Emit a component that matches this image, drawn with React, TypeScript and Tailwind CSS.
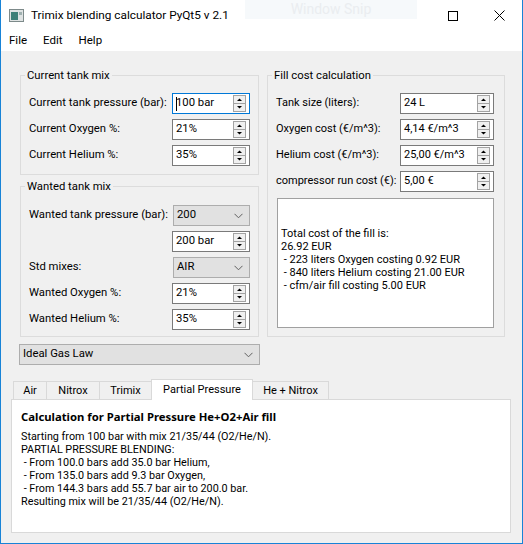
import type { ReactNode } from "react";

function SpinArrows() {
  return (
    <svg width="13" height="17" viewBox="0 0 13 17" className="shrink-0">
      <rect x="0.5" y="0.5" width="12" height="16" fill="#f0f0f0" stroke="#a3a3a3" />
      <line x1="1" y1="8.5" x2="12" y2="8.5" stroke="#a3a3a3" />
      <path d="M4 6 L6.5 3.5 L9 6 Z" fill="#000" />
      <path d="M4 11 L6.5 13.5 L9 11 Z" fill="#000" />
    </svg>
  );
}

function SpinBox({ value, focused = false, className = "" }: { value: string; focused?: boolean; className?: string }) {
  return (
    <div
      className={`h-[21px] shrink-0 bg-white border flex items-center justify-between pl-[3px] pr-[3px] ${
        focused ? "border-[#0078d7]" : "border-[#7a7a7a]"
      } ${className}`}
    >
      <span className="flex items-center whitespace-nowrap">
        {focused && <span className="w-px h-[14px] bg-black mr-[-1px]" />}
        {value}
      </span>
      <SpinArrows />
    </div>
  );
}

function Chevron() {
  return (
    <svg width="9" height="6" viewBox="0 0 9 6" className="shrink-0">
      <path d="M0.5 0.8 L4.5 4.8 L8.5 0.8" fill="none" stroke="#606060" strokeWidth="1" />
    </svg>
  );
}

function ComboBox({ value, className = "" }: { value: string; className?: string }) {
  return (
    <div
      className={`h-[21px] shrink-0 bg-[#e1e1e1] border border-[#adadad] flex items-center justify-between pl-[3px] pr-[6px] ${className}`}
    >
      <span>{value}</span>
      <Chevron />
    </div>
  );
}

function GroupBox({ title, className = "", children }: { title: string; className?: string; children: ReactNode }) {
  return (
    <fieldset className={`border border-[#dcdcdc] ${className}`}>
      <legend className="ml-[4px] px-[2px] leading-[15px]">{title}</legend>
      {children}
    </fieldset>
  );
}

function Row({ label, children }: { label: string; children: ReactNode }) {
  return (
    <div className="flex items-center justify-between h-[21px]">
      <span className="whitespace-nowrap">{label}</span>
      {children}
    </div>
  );
}

const tabs = [
  { label: "Air", w: "w-[34px]" },
  { label: "Nitrox", w: "w-[54px]" },
  { label: "Trimix", w: "w-[53px]" },
  { label: "Partial Pressure", w: "w-[102px]", active: true },
  { label: "He + Nitrox", w: "w-[77px]" },
];

const costLines = [
  "Total cost of the fill is:",
  "26.92 EUR",
  " - 223 liters Oxygen costing 0.92 EUR",
  " - 840 liters Helium costing 21.00 EUR",
  " - cfm/air fill costing 5.00 EUR",
];

const resultLines = [
  "Starting from 100 bar with mix 21/35/44 (O2/He/N).",
  "PARTIAL PRESSURE BLENDING:",
  " - From 100.0 bars add 35.0 bar Helium,",
  " - From 135.0 bars add 9.3 bar Oxygen,",
  " - From 144.3 bars add 55.7 bar air to 200.0 bar.",
  "Resulting mix will be 21/35/44 (O2/He/N).",
];

export default function App() {
  return (
    <div className="w-[523px] h-[544px] flex flex-col border-x border-b border-[#1883d7] bg-[#f0f0f0] text-black text-[11.3px] font-['Roboto',sans-serif] overflow-hidden">
      {/* Title bar */}
      <div className="relative h-[31px] shrink-0 bg-white flex items-center">
        <svg width="15" height="13" viewBox="0 0 15 13" className="ml-[8px] shrink-0">
          <rect x="0.5" y="0.5" width="14" height="12" fill="#dfe3e3" stroke="#7d8a8a" />
          <rect x="2" y="3" width="7" height="8" fill="#3e8078" />
          <rect x="10" y="3" width="3" height="3" fill="#9fb0b0" />
        </svg>
        <span className="ml-[7px] text-[11.8px]">Trimix blending calculator PyQt5 v 2.1</span>
        <div className="absolute left-[244px] top-0 w-[172px] h-[19px] bg-[#f6f9fb] flex items-center justify-center text-[14px] text-[#eaedf0]">
          Window Snip
        </div>
        <div className="ml-auto flex h-full">
          <div className="w-[46px] h-full flex items-center justify-center">
            <svg width="10" height="10" viewBox="0 0 10 10">
              <line x1="0" y1="5.5" x2="10" y2="5.5" stroke="#000" />
            </svg>
          </div>
          <div className="w-[46px] h-full flex items-center justify-center">
            <svg width="10" height="10" viewBox="0 0 10 10">
              <rect x="0.5" y="0.5" width="9" height="9" fill="none" stroke="#000" />
            </svg>
          </div>
          <div className="w-[46px] h-full flex items-center justify-center">
            <svg width="11" height="11" viewBox="0 0 11 11">
              <path d="M0.5 0.5 L10.5 10.5 M10.5 0.5 L0.5 10.5" stroke="#000" strokeWidth="1" />
            </svg>
          </div>
        </div>
      </div>

      {/* Menu bar */}
      <div className="h-[20px] shrink-0 bg-white flex items-center pl-[8px] gap-[16px] text-[11.5px]">
        <span>File</span>
        <span>Edit</span>
        <span>Help</span>
      </div>

      <div className="flex-1 flex flex-col px-[10px]">
        <div className="flex gap-[7px] pl-[8px] pt-[17px]">
          {/* Left column */}
          <div className="w-[241px] flex flex-col">
            <GroupBox title="Current tank mix" className="mx-[1px]">
              <div className="flex flex-col gap-[5px] pt-[10px] pb-[8px] pl-[8px] pr-[8px]">
                <Row label="Current tank pressure (bar):">
                  <SpinBox value="100 bar" focused className="w-[78px]" />
                </Row>
                <Row label="Current Oxygen %:">
                  <SpinBox value="21%" className="w-[78px]" />
                </Row>
                <Row label="Current Helium %:">
                  <SpinBox value="35%" className="w-[78px]" />
                </Row>
              </div>
            </GroupBox>

            <GroupBox title="Wanted tank mix" className="mx-[1px] mt-[4px]">
              <div className="flex flex-col gap-[5px] pt-[11px] pb-[6px] pl-[8px] pr-[8px]">
                <Row label="Wanted tank pressure (bar):">
                  <ComboBox value="200" className="w-[77px]" />
                </Row>
                <div className="flex justify-end">
                  <SpinBox value="200 bar" className="w-[78px]" />
                </div>
                <Row label="Std mixes:">
                  <ComboBox value="AIR" className="w-[77px]" />
                </Row>
                <Row label="Wanted Oxygen %:">
                  <SpinBox value="21%" className="w-[78px]" />
                </Row>
                <Row label="Wanted Helium %:">
                  <SpinBox value="35%" className="w-[78px]" />
                </Row>
              </div>
            </GroupBox>

            <ComboBox value="Ideal Gas Law" className="mt-[7px] w-full pl-[2px]" />
          </div>

          {/* Right column */}
          <GroupBox title="Fill cost calculation" className="w-[237px] self-start">
            <div className="flex flex-col pt-[10px] pb-[8px] pl-[8px] pr-[10px] text-[11px]">
              <div className="flex flex-col gap-[5px]">
                <Row label="Tank size (liters):">
                  <SpinBox value="24 L" className="w-[94px]" />
                </Row>
                <Row label="Oxygen cost (€/m^3):">
                  <SpinBox value="4,14 €/m^3" className="w-[94px]" />
                </Row>
                <Row label="Helium cost (€/m^3):">
                  <SpinBox value="25,00 €/m^3" className="w-[94px]" />
                </Row>
                <Row label="compressor run cost (€):">
                  <SpinBox value="5,00 €" className="w-[94px]" />
                </Row>
              </div>
              <div className="mt-[6px] ml-[1px] h-[130px] w-[217px] bg-white border border-[#a0a0a0] flex flex-col justify-center pl-[3px] pb-[8px]">
                {costLines.map((l) => (
                  <div key={l} className="whitespace-pre leading-[13px]">
                    {l}
                  </div>
                ))}
              </div>
            </div>
          </GroupBox>
        </div>

        {/* Tabs */}
        <div className="mt-[14px] flex flex-col">
          <div className="flex items-end h-[20px] pl-[2px] text-[11px]">
            {tabs.map((t) =>
              t.active ? (
                <div
                  key={t.label}
                  className={`${t.w} h-[21px] -mb-px -ml-px relative z-10 bg-white border border-b-0 border-[#d9d9d9] flex items-center justify-center`}
                >
                  {t.label}
                </div>
              ) : (
                <div
                  key={t.label}
                  className={`${t.w} h-[18px] -ml-px first:ml-0 bg-[#f0f0f0] border border-b-0 border-[#d9d9d9] flex items-center justify-center pt-[1px]`}
                >
                  {t.label}
                </div>
              )
            )}
          </div>
          <div className="w-[500px] h-[134px] bg-white border border-[#d9d9d9] pl-[9px] pt-[9px]">
            <div className="font-['Noto_Sans',sans-serif] font-bold text-[11.3px] leading-[15px]">
              Calculation for Partial Pressure He+O2+Air fill
            </div>
            <div className="mt-[6px] text-[10.8px] leading-[13px]">
              {resultLines.map((l) => (
                <div key={l} className="whitespace-pre">
                  {l}
                </div>
              ))}
            </div>
          </div>
        </div>
      </div>
    </div>
  );
}
